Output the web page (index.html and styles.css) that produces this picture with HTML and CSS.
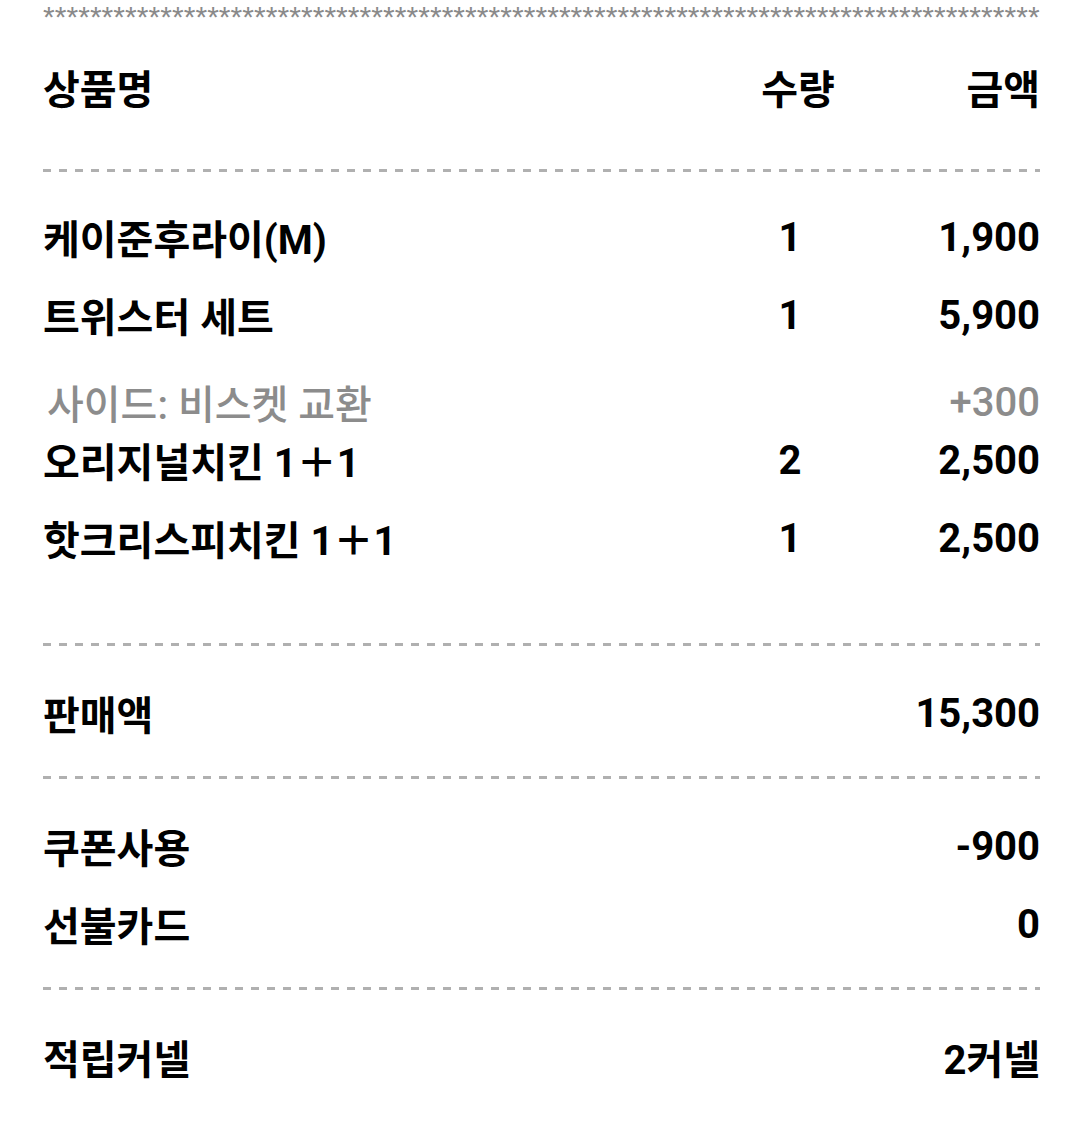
FILE: index.html
```html
<!DOCTYPE html>
<html lang="ko">
<head>
<meta charset="utf-8">
<link rel="stylesheet" href="styles.css">
</head>
<body>
<div class="receipt">
  <div class="stars">*************************************************************************************</div>
  <div class="row head">
    <span class="name">상품명</span><span class="qty">수량</span><span class="amt">금액</span>
  </div>
  <div class="dash"></div>
  <div class="section items">
    <div class="row"><span class="name">케이준후라이(M)</span><span class="qty">1</span><span class="amt">1,900</span></div>
    <div class="row"><span class="name">트위스터 세트</span><span class="qty">1</span><span class="amt">5,900</span></div>
    <div class="row opt"><span class="name">사이드: 비스켓 교환</span><span class="qty"></span><span class="amt">+300</span></div>
    <div class="row short"><span class="name">오리지널치킨 1＋1</span><span class="qty">2</span><span class="amt">2,500</span></div>
    <div class="row after-short"><span class="name">핫크리스피치킨 1＋1</span><span class="qty">1</span><span class="amt">2,500</span></div>
  </div>
  <div class="dash"></div>
  <div class="section">
    <div class="row"><span class="name">판매액</span><span class="amt">15,300</span></div>
  </div>
  <div class="dash"></div>
  <div class="section">
    <div class="row"><span class="name">쿠폰사용</span><span class="amt">-900</span></div>
    <div class="row"><span class="name">선불카드</span><span class="amt">0</span></div>
  </div>
  <div class="dash"></div>
  <div class="section">
    <div class="row"><span class="name">적립커넬</span><span class="amt">2커넬</span></div>
  </div>
</div>
</body>
</html>
```

FILE: styles.css
```css
html, body {
  margin: 0;
  padding: 0;
  background: #ffffff;
}
body {
  font-family: "Roboto", "Noto Sans CJK KR", sans-serif;
  color: #000;
}
.receipt {
  width: 997px;
  margin-left: 43px;
  display: flex;
  flex-direction: column;
}
.stars {
  height: 34px;
  line-height: 34px;
  font-size: 30px;
  letter-spacing: 0.05px;
  color: #8a8a8a;
  white-space: nowrap;
  font-family: "Liberation Sans", sans-serif;
}
.row {
  display: grid;
  grid-template-columns: 1fr 120px 190px;
  align-items: center;
  height: 78px;
  font-size: 40px;
  font-weight: 700;
}
.row .qty { text-align: center; grid-column: 2; }
.row .amt { text-align: right; grid-column: 3; }
.row .name { grid-column: 1; white-space: nowrap; }
.head { margin-top: 14px; }
.head .qty { padding-left: 16px; }
.dash {
  height: 3px;
  background: repeating-linear-gradient(to right, #b0b0b0 0 8px, transparent 8px 16px);
}
.head + .dash { margin-top: 43px; }
.section { padding: 28px 0 24px; }
.section.items { padding: 26px 0 66px; }
.row.opt {
  height: 58px;
  margin-top: 19px;
  color: #8c8c8c;
  font-weight: 500;
}
.row.opt .name { padding-left: 4px; }
.row.short { height: 58px; }
.row.after-short { margin-top: 10px; }
```
